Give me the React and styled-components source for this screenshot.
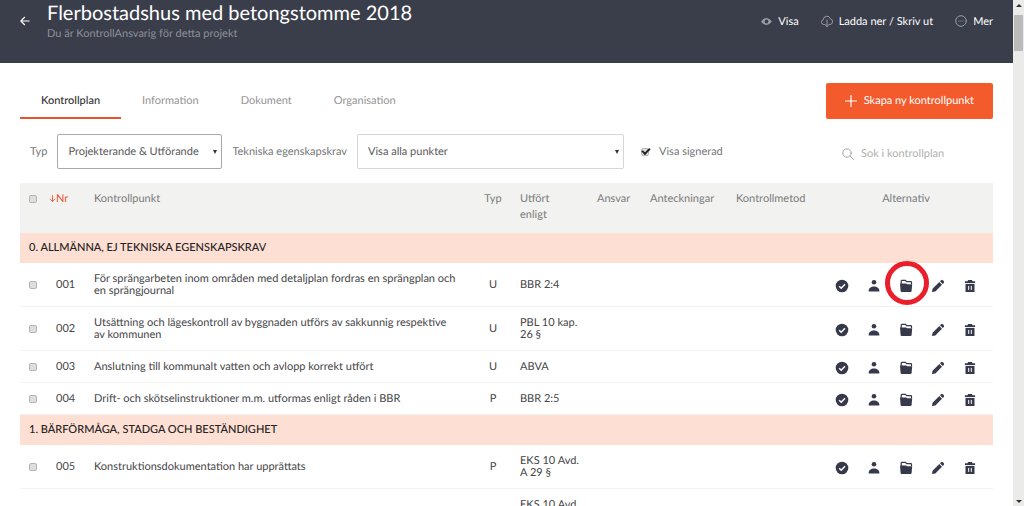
import React from "react";
import styled, { createGlobalStyle } from "styled-components";

const GlobalStyle = createGlobalStyle`
  * {
    box-sizing: border-box;
  }

  body {
    margin: 0;
    background: #fff;
    color: #454547;
    font-family: Lato, "Open Sans", sans-serif;
    font-size: 11px;
    text-rendering: geometricPrecision;
  }

  button,
  input,
  select {
    font: inherit;
    text-rendering: inherit;
  }
`;

const Shell = styled.div`
  display: flex;
  height: 100vh;
  overflow: hidden;
`;

const Page = styled.div`
  flex: 1;
  min-width: 0;
`;

/* Scrollbar */

const Scrollbar = styled.div`
  display: flex;
  flex-direction: column;
  align-items: center;
  width: 11px;
  padding: 4px 0 3px;
  background: #ebebe9;
`;

const Thumb = styled.div`
  width: 9px;
  height: 36px;
  margin: 8px 0 auto;
  background: #bbb;
`;

const ScrollArrow = styled.span`
  border: 3px solid transparent;
  border-top-width: ${(p) => (p.$down ? "3px" : "0")};
  border-bottom-width: ${(p) => (p.$down ? "0" : "3px")};
  border-${(p) => (p.$down ? "top" : "bottom")}-color: #333;
`;

/* Header */

const Header = styled.header`
  display: flex;
  align-items: center;
  padding: 0 20px 21px;
  background: #3a3d4a;
  color: #fff;
`;

const BackLink = styled.a`
  display: flex;
  width: 27px;
  color: #fff;
`;

const Heading = styled.div`
  flex: 1;
`;

const Title = styled.h1`
  margin: 0;
  font-size: 20px;
  font-weight: 400;
  line-height: 26px;
`;

const Subtitle = styled.p`
  margin: 0;
  color: #8e909a;
  line-height: 16px;
`;

const Actions = styled.nav`
  display: flex;
  gap: 22px;
`;

const Action = styled.button`
  display: flex;
  align-items: center;
  gap: 6px;
  padding: 0;
  border: 0;
  background: none;
  color: #fff;
  cursor: pointer;

  svg {
    color: #9a9ca5;
  }
`;

/* Tabs and filters */

const Main = styled.main`
  padding: 20px 20px 0;
`;

const TopRow = styled.div`
  display: flex;
  justify-content: space-between;
  height: 36px;
`;

const Tabs = styled.nav`
  display: flex;
`;

const Tab = styled.a`
  padding: 0 21px;
  border-bottom: 2px solid ${(p) => (p.$active ? "#e8532f" : "transparent")};
  color: ${(p) => (p.$active ? "#333" : "#949494")};
  font-weight: ${(p) => (p.$active ? 500 : 400)};
  line-height: 35px;
  text-decoration: none;
`;

const CreateButton = styled.button`
  display: flex;
  align-items: center;
  gap: 7px;
  padding: 0 19px 1px;
  border: 0;
  border-radius: 2px;
  background: #f35b2d;
  color: #fff;
  cursor: pointer;
`;

const Filters = styled.form`
  display: flex;
  align-items: center;
  gap: 10px;
  padding: 15px 0 14px 10px;
  color: #767678;
`;

const SelectBox = styled.div`
  display: grid;
  align-items: center;
  width: ${(p) => p.$width};

  > * {
    grid-area: 1 / 1;
  }
`;

const Select = styled.select`
  width: 100%;
  height: 35px;
  padding: 0 10px;
  border: 1px solid ${(p) => (p.$dark ? "#a9a9ab" : "#d6d6d6")};
  border-radius: 2px;
  appearance: none;
  background: #fff;
  color: #58585a;
`;

const Caret = styled.span`
  justify-self: end;
  margin-right: 5px;
  border: 2px solid transparent;
  border-top: 4px solid #333;
  border-bottom: 0;
  pointer-events: none;
`;

const CheckLabel = styled.label`
  display: flex;
  align-items: center;
  gap: 10px;
  margin-left: 7px;
`;

const Checkbox = styled.input`
  display: grid;
  place-items: center;
  width: 8px;
  height: 8px;
  margin: 0;
  border: 1px solid #b4b4b4;
  border-radius: 2px;
  appearance: none;
  background: #dedede;

  &:checked::before {
    content: "";
    width: 6px;
    height: 3px;
    border: solid #222;
    border-width: 0 0 2px 2px;
    transform: translateY(-1px) rotate(-45deg);
  }
`;

const Search = styled.label`
  display: flex;
  align-items: center;
  gap: 7px;
  width: 151px;
  margin-left: auto;
  padding-top: 4px;
  color: #a6a6a6;
`;

const SearchInput = styled.input`
  flex: 1;
  min-width: 0;
  padding: 0;
  border: 0;
  outline: 0;

  &::placeholder {
    color: #b0b0b0;
  }
`;

/* Table */

const Table = styled.table`
  width: 100%;
  border-collapse: collapse;
  table-layout: fixed;
`;

const Col = styled.col`
  width: ${(p) => p.$width};
`;

const HeadCell = styled.th`
  height: 50px;
  padding: 8px 0 0 ${(p) => p.$left || "0"};
  background: #f2f2f0;
  color: ${(p) => (p.$sorted ? "#e8532f" : "#7a7a7c")};
  font-weight: 400;
  line-height: 16px;
  text-align: ${(p) => (p.$center ? "center" : "left")};
  vertical-align: top;

  ${Checkbox} {
    margin-top: 4px;
  }
`;

const SectionCell = styled.th`
  height: 30px;
  padding: 0 9px 1px;
  background: #fddfd4;
  color: #262223;
  font-weight: 500;
  text-align: left;
`;

const Row = styled.tr`
  border-bottom: 1px solid #f2f2f2;
`;

const Cell = styled.td`
  height: 32px;
  padding: 10px ${(p) => p.$right || "0"} 9px ${(p) => p.$left || "0"};
  line-height: 12px;
  text-align: ${(p) => (p.$center ? "center" : "left")};
`;

const Tools = styled.div`
  display: flex;
  justify-content: center;
  height: 12px;
`;

const Tool = styled.button`
  position: relative;
  display: flex;
  justify-content: center;
  width: 32px;
  height: 14px;
  padding: 0;
  border: 0;
  background: none;
  color: #35394a;
  cursor: pointer;
`;

const Ring = styled.span`
  position: absolute;
  top: 50%;
  left: 50%;
  width: 44px;
  height: 44px;
  margin: -25px 0 0 -21px;
  border: 5px solid #e9202c;
  border-radius: 50%;
`;

const Icon = ({ size = 14, children }) => (
  <svg width={size} height={size} viewBox="0 0 14 14" fill="currentColor" aria-hidden="true">
    {children}
  </svg>
);

const Line = ({ size = 12, width = 1, children }) => (
  <svg
    width={size}
    height={size}
    viewBox="0 0 12 12"
    fill="none"
    stroke="currentColor"
    strokeWidth={width}
    strokeLinecap="round"
    strokeLinejoin="round"
    aria-hidden="true"
  >
    {children}
  </svg>
);

const tools = [
  {
    name: "Signera",
    icon: (
      <>
        <circle cx="7" cy="7" r="6.3" />
        <path d="M4.2 7.2l2 2 3.8-3.9" fill="none" stroke="#fff" strokeWidth="1.5" />
      </>
    ),
  },
  {
    name: "Ansvarig",
    icon: (
      <>
        <circle cx="7" cy="3.2" r="2.3" />
        <path d="M1.7 12.6v-1C1.7 9.3 4 7.6 7 7.6s5.3 1.7 5.3 4v1z" />
      </>
    ),
  },
  {
    name: "Dokument",
    icon: (
      <>
        <path d="M2.2 5V2.2q0-.8.8-.8h3.4l1.300 1.200h4q.8 0 .8.8V5" fill="none" stroke="currentColor" strokeWidth="1.200" />
        <path d="M1 4.600h6l1.200.7h5l-.6 6.700q-.1 1.100-1.100 1.100H2.700q-1 0-1.100-1.100z" />
      </>
    ),
  },
  {
    name: "Redigera",
    icon: (
      <>
        <path d="M.9 13.1l.7-3.4L8.3 3l2.7 2.7-6.7 6.7z" />
        <path d="M9 2.3l1.1-1.1q.8-.7 1.6 0l1.1 1.1q.7.8 0 1.6L11.7 5z" />
      </>
    ),
  },
  {
    name: "Ta bort",
    icon: (
      <>
        <path d="M1.9 2.3h2.9V1h4.4v1.3h2.9V4H1.9z" />
        <path d="M2.5 4.9h9V13h-9z" />
        <path d="M5.7 6.9v4M8.3 6.9v4" stroke="#fff" strokeWidth="1" />
      </>
    ),
  },
];

const sections = [
  {
    title: "0. ALLMÄNNA, EJ TEKNISKA EGENSKAPSKRAV",
    rows: [
      {
        nr: "001",
        text: "För sprängarbeten inom områden med detaljplan fordras en sprängplan och en sprängjournal",
        type: "U",
        rule: "BBR 2:4",
        marked: true,
      },
      {
        nr: "002",
        text: "Utsättning och lägeskontroll av byggnaden utförs av sakkunnig respektive av kommunen",
        type: "U",
        rule: "PBL 10 kap. 26 §",
      },
      { nr: "003", text: "Anslutning till kommunalt vatten och avlopp korrekt utfört", type: "U", rule: "ABVA" },
      { nr: "004", text: "Drift- och skötselinstruktioner m.m. utformas enligt råden i BBR", type: "P", rule: "BBR 2:5" },
    ],
  },
  {
    title: "1. BÄRFÖRMÅGA, STADGA OCH BESTÄNDIGHET",
    rows: [
      { nr: "005", text: "Konstruktionsdokumentation har upprättats", type: "P", rule: "EKS 10 Avd. A 29 §" },
      { nr: "", text: "", type: "", rule: "EKS 10 Avd." },
    ],
  },
];

function PointRow({ row }) {
  return (
    <Row>
      <Cell $left="9px">{row.nr && <Checkbox type="checkbox" aria-label={`Välj ${row.nr}`} />}</Cell>
      <Cell $left="7px">{row.nr}</Cell>
      <Cell $right="18px">{row.text}</Cell>
      <Cell $center>{row.type}</Cell>
      <Cell $left="10px" $right="12px">{row.rule}</Cell>
      <Cell />
      <Cell />
      <Cell />
      <Cell>
        {row.nr && (
          <Tools>
            {tools.map((tool) => (
              <Tool key={tool.name} type="button" aria-label={tool.name}>
                <Icon>{tool.icon}</Icon>
                {row.marked && tool.name === "Dokument" && <Ring />}
              </Tool>
            ))}
          </Tools>
        )}
      </Cell>
    </Row>
  );
}

export default function App() {
  return (
    <Shell>
      <GlobalStyle />
      <Page>
        <Header>
          <BackLink href="#" aria-label="Tillbaka">
            <Line size={10} width={1.3}>
              <path d="M11 6H1M5.5 1.5L1 6l4.5 4.5" />
            </Line>
          </BackLink>
          <Heading>
            <Title>Flerbostadshus med betongstomme 2018</Title>
            <Subtitle>Du är KontrollAnsvarig för detta projekt</Subtitle>
          </Heading>
          <Actions>
            <Action type="button">
              <Icon size={11}>
                <path
                  fillRule="evenodd"
                  d="M0 7Q7-2 14 7 7 16 0 7zM7 4.6a2.4 2.4 0 1 0 0 4.8 2.4 2.4 0 0 0 0-4.800z"
                />
              </Icon>
              Visa
            </Action>
            <Action type="button">
              <Line>
                <path d="M3.5 9.5h-.6a2.4 2.4 0 0 1-.7-4.7 3.7 3.700 0 0 1 7.200-1 2.900 2.900 0 0 1-.4 5.700h-.5M6 5v6.500M4.200 9.800L6 11.500l1.800-1.700" />
              </Line>
              Ladda ner / Skriv ut
            </Action>
            <Action type="button">
              <Line>
                <circle cx="6" cy="6" r="5.3" />
                <path d="M3.5 6h5" strokeDasharray="1 1" strokeLinecap="butt" />
              </Line>
              Mer
            </Action>
          </Actions>
        </Header>
        <Main>
          <TopRow>
            <Tabs>
              <Tab href="#" $active>Kontrollplan</Tab>
              <Tab href="#">Information</Tab>
              <Tab href="#">Dokument</Tab>
              <Tab href="#">Organisation</Tab>
            </Tabs>
            <CreateButton type="button">
              <Line width={1.2}>
                <path d="M6 .5v11M.5 6h11" />
              </Line>
              Skapa ny kontrollpunkt
            </CreateButton>
          </TopRow>
          <Filters>
            <label htmlFor="type">Typ</label>
            <SelectBox $width="165px">
              <Select id="type" $dark>
                <option>Projekterande &amp; Utförande</option>
              </Select>
              <Caret />
            </SelectBox>
            <label htmlFor="requirement">Tekniska egenskapskrav</label>
            <SelectBox $width="267px">
              <Select id="requirement">
                <option>Visa alla punkter</option>
              </Select>
              <Caret />
            </SelectBox>
            <CheckLabel>
              <Checkbox type="checkbox" defaultChecked />
              Visa signerad
            </CheckLabel>
            <Search>
              <Line>
                <circle cx="5" cy="5" r="4.2" />
                <path d="M8.2 8.2l3.3 3.3" />
              </Line>
              <SearchInput placeholder="Sok i kontrollplan" aria-label="Sok i kontrollplan" />
            </Search>
          </Filters>
          <Table>
            <colgroup>
              <Col $width="29px" />
              <Col $width="45px" />
              <Col />
              <Col $width="34px" />
              <Col $width="87px" />
              <Col $width="53px" />
              <Col $width="86px" />
              <Col $width="83px" />
              <Col $width="174px" />
            </colgroup>
            <thead>
              <tr>
                <HeadCell $left="9px"><Checkbox type="checkbox" aria-label="Välj alla" /></HeadCell>
                <HeadCell $sorted>
                  <Line size={7} width={1.5}><path d="M6 1v10M2 7l4 4 4-4" /></Line>
                  Nr
                </HeadCell>
                <HeadCell>Kontrollpunkt</HeadCell>
                <HeadCell $center>Typ</HeadCell>
                <HeadCell $left="10px">Utfört<br />enligt</HeadCell>
                <HeadCell>Ansvar</HeadCell>
                <HeadCell>Anteckningar</HeadCell>
                <HeadCell>Kontrollmetod</HeadCell>
                <HeadCell $center>Alternativ</HeadCell>
              </tr>
            </thead>
            {sections.map((section) => (
              <tbody key={section.title}>
                <tr>
                  <SectionCell colSpan={9}>{section.title}</SectionCell>
                </tr>
                {section.rows.map((row) => (
                  <PointRow key={row.nr} row={row} />
                ))}
              </tbody>
            ))}
          </Table>
        </Main>
      </Page>
      <Scrollbar aria-hidden="true">
        <ScrollArrow />
        <Thumb />
        <ScrollArrow $down />
      </Scrollbar>
    </Shell>
  );
}
